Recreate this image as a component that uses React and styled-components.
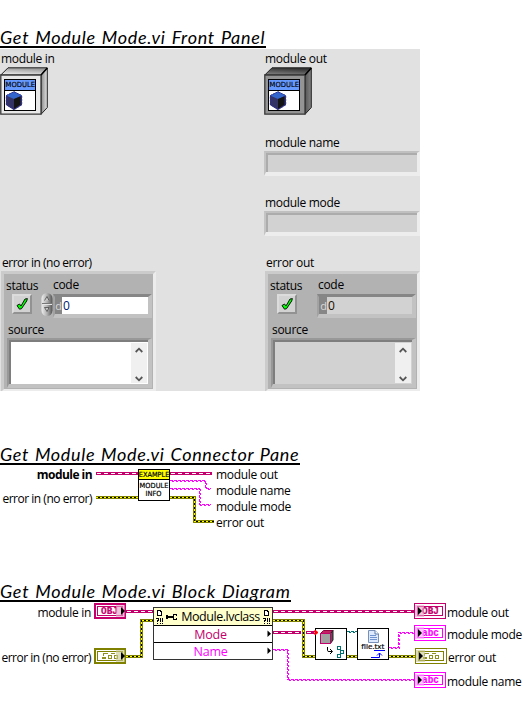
import React from "react";
import styled, { createGlobalStyle } from "styled-components";

const Global = createGlobalStyle`
  body { margin: 0; background: #fff; color: #000; }
  * { box-sizing: border-box; }
`;

const OBJ = "#c4006c";
const STR = "#ff00ff";
const ERR = "#7f7f00";
const SANS = '"Open Sans", "Noto Sans", sans-serif';

const Page = styled.main`
  width: 524px;
  height: 714px;
  overflow: hidden;
  display: flex;
  flex-direction: column;
  align-items: flex-start;
`;

const Heading = styled.h2`
  margin: ${(p) => p.$top}px 0 0;
  height: 21px;
  width: ${(p) => p.$width}px;
  overflow: hidden;
  border-bottom: 2px solid #000;
  font: italic 400 18px/20px Lato, sans-serif;
  letter-spacing: ${(p) => p.$track ?? 0.72}px;
  word-spacing: 1px;
  white-space: nowrap;
`;

const Label = styled.span`
  display: block;
  height: 16px;
  font: ${(p) => (p.$bold ? 700 : 400)} 12px/17px ${SANS};
  letter-spacing: ${(p) => p.$track ?? -0.3}px;
  white-space: nowrap;
  color: #000;
`;

/* ---------- front panel ---------- */

const FrontPanel = styled.section`
  width: 420px;
  height: 343px;
  margin-top: 1px;
  background: #e1e1e1;
  display: grid;
  grid-template-columns: 264px 156px;
  overflow: hidden;
`;

const PanelColumn = styled.div`
  display: flex;
  flex-direction: column;
  padding-top: 1px;
`;

const Control = styled.div`
  height: ${(p) => p.$height}px;
  flex: none;
  & > ${Label} { margin-left: ${(p) => p.$inset || 1}px; margin-bottom: 1px; }
  & > svg { display: block; }
`;

const StringField = styled.div`
  width: 156px;
  height: 25px;
  background: #d2d2d2;
  border: solid;
  border-width: 2px 3px 4px 2px;
  border-color: #c0c0c0 #ededed #ededed #c4c4c4;
  box-shadow: inset 2px 2px 0 #acacac;
`;

const ClusterBox = styled.div`
  width: 155px;
  height: 121px;
  margin-left: 1px;
  background: #b2b2b2;
  border: 3px solid;
  border-color: #cbcbcb #ececec #ececec #cbcbcb;
  display: flex;
  flex-direction: column;
`;

const ClusterRow = styled.div`
  display: flex;
  height: 47px;
`;

const StatusCell = styled.div`
  width: ${(p) => (p.$out ? 49 : 37)}px;
  padding: 3px 0 0 2px;
`;

const Led = styled.div`
  width: 20px;
  height: 20px;
  margin: 1px 0 0 ${(p) => (p.$out ? 7 : 6)}px;
  background: #d2d2d2;
  border: 2px solid;
  border-color: #dcdcdc #929292 #929292 #dcdcdc;
  svg { display: block; }
`;

const CodeCell = styled.div`
  display: flex;
  flex-direction: column;
  padding-top: 2px;
  & > ${Label} { margin-left: ${(p) => (p.$out ? 1 : 12)}px; }
`;

const CodeRow = styled.div`
  display: flex;
  align-items: flex-start;
  padding-top: 2px;
  svg { display: block; margin-top: -2px; }
`;

const NumberField = styled.div`
  display: flex;
  width: 99px;
  height: 24px;
  border: solid;
  border-width: 3px 4px 4px 2px;
  border-color: #868686 #c2c2c2 #c2c2c2 #a2a2a2;
  background: ${(p) => (p.$out ? "#d2d2d2" : "#fff")};
`;

const Radix = styled.span`
  width: ${(p) => (p.$out ? 8 : 7)}px;
  background: #868686;
  color: #d8d8d8;
  text-align: right;
  font: 11px/18px ${SANS};
`;

const Digits = styled.span`
  padding-left: 1px;
  font: 12px/18px ${SANS};
  color: ${(p) => (p.$out ? "#201000" : "#002070")};
`;

const SourceCell = styled.div`
  padding-left: 3px;
  & > ${Label} { margin-left: 1px; margin-bottom: 1px; }
`;

const SourceBox = styled.div`
  width: 145px;
  height: 50px;
  border: solid;
  border-width: 2px 4px 4px 2px;
  border-color: #989898 #c2c2c2 #c2c2c2 #989898;
  box-shadow: inset 2px 2px 0 #7e7e7e;
  background: ${(p) => (p.$out ? "#d2d2d2" : "#fff")};
  display: flex;
  justify-content: flex-end;
  padding: 3px 1px 1px 3px;
`;

const ScrollBar = styled.div`
  width: 16px;
  background: #f0f0f0;
  display: flex;
  flex-direction: column;
  justify-content: space-between;
  align-items: center;
  padding: 4px 0 1px;
  svg { display: block; }
`;

const Chevron = ({ down }) => (
  <svg width="8" height="6" viewBox="0 0 8 6">
    <path d={down ? "M0.7 1L4 4.3L7.3 1" : "M0.7 5L4 1.7L7.3 5"} fill="none" stroke="#555" strokeWidth="1.8" />
  </svg>
);

const Spinner = () => (
  <svg width="12" height="25" viewBox="0 0 12 25">
    <defs>
      <linearGradient id="knob">
        <stop offset="0" stopColor="#eee" />
        <stop offset=".5" stopColor="#b0b0b0" />
        <stop offset="1" stopColor="#555" />
      </linearGradient>
    </defs>
    <rect x=".5" y="1" width="11" height="23" rx="5.5" fill="url(#knob)" />
    <path d="M2 12.5H11" stroke="#e6e6e6" />
    <path d="M1 11.5H11" stroke="#777" />
    <path d="M3.5 8.5L6 4.5L8 8.5M3.5 15.5H8L6 19.5Z" fill="#c8c8c8" stroke="#4a4a4a" strokeWidth=".8" />
  </svg>
);

const Check = () => (
  <svg width="16" height="16" viewBox="0 0 16 16">
    <path d="M3 9.5L5.5 8L7 10L11 3L13.4 2.6L12.7 5L7.5 12.7L5.5 13.2Z" fill="#00ff00" stroke="#000" strokeWidth=".9" />
  </svg>
);

const ClassCube = ({ dark }) => {
  const id = dark ? "cubeDark" : "cubeLight";
  return (
    <svg width="48" height="48" viewBox="0 0 48 48">
      <defs>
        <linearGradient id={id + "T"} x1="0" x2=".3" y1="1" y2="0">
          <stop offset="0" stopColor={dark ? "#888" : "#f4f4f4"} />
          <stop offset="1" stopColor={dark ? "#333" : "#999"} />
        </linearGradient>
        <linearGradient id={id + "S"} x1="0" x2="1">
          <stop offset="0" stopColor={dark ? "#555" : "#888"} />
          <stop offset="1" stopColor={dark ? "#858585" : "#e4e4e4"} />
        </linearGradient>
      </defs>
      <path d="M.8 8L8 .8H47.2L41 8Z" fill={`url(#${id}T)`} stroke="#222" />
      <path d="M41 8L47.3 1V40.5L41 47.3Z" fill={`url(#${id}S)`} stroke="#222" />
      <path d="M.8 8H41V47.2H.8Z" fill={dark ? "#949494" : "#e8e8e8"} stroke="#383838" strokeWidth="1.3" />
      <path d="M41 8L47.3 1" stroke="#000" strokeWidth="1.5" />
      <rect x="4.5" y="12.5" width="31" height="31" fill="#fff" stroke="#000" />
      <rect x="5" y="13" width="30" height="10" fill="#6699ff" />
      <path d="M4 23.5H36" stroke="#000" />
      <text x="5.6" y="20.4" fontFamily="DejaVu Sans" fontSize="7" textLength="29.4" lengthAdjust="spacingAndGlyphs" stroke="#000" strokeWidth=".15">MODULE</text>
      <path d="M14 24.5L22 28.5V38L14 43L6 38V28.5Z" fill="#333366" />
      <path d="M14 24.5L22 28.5L14 32L6 28.5Z" fill="#3366cc" />
      <path d="M14 32L20.5 29.2V37.5L14 42Z" fill="#141414" />
      <path d="M14 24.8L21.7 28.6V37.8L14 42.6L6.3 37.8V28.6Z" fill="none" stroke="#333399" strokeDasharray="2 1" />
    </svg>
  );
};

const ErrorCluster = ({ out }) => (
  <ClusterBox>
    <ClusterRow>
      <StatusCell $out={out}>
        <Label>status</Label>
        <Led $out={out}><Check /></Led>
      </StatusCell>
      <CodeCell $out={out}>
        <Label>code</Label>
        <CodeRow>
          {!out && <Spinner />}
          <NumberField $out={out}>
            <Radix $out={out}>d</Radix>
            <Digits $out={out}>0</Digits>
          </NumberField>
        </CodeRow>
      </CodeCell>
    </ClusterRow>
    <SourceCell>
      <Label>source</Label>
      <SourceBox $out={out}>
        <ScrollBar><Chevron /><Chevron down /></ScrollBar>
      </SourceBox>
    </SourceCell>
  </ClusterBox>
);

/* ---------- diagrams ---------- */

const Canvas = styled.section`
  position: relative;
  width: 524px;
  height: ${(p) => p.$height}px;
  flex: none;
`;

const Drawing = styled.svg`
  position: absolute;
  left: 0;
  top: 0;
`;

const NodeLabel = styled(Label)`
  position: absolute;
  top: ${(p) => p.$y - 8}px;
  ${(p) => (p.$right ? `right: ${524 - p.$right}px;` : `left: ${p.$x}px;`)}
`;

const ObjWire = ({ d }) => (
  <g fill="none" shapeRendering="crispEdges">
    <path d={d} stroke={OBJ} strokeWidth="3" />
    <path d={d} stroke="#fff" strokeWidth="1" strokeDasharray="4 3" strokeDashoffset="-1" />
  </g>
);

const ErrWire = ({ d }) => (
  <g fill="none" shapeRendering="crispEdges">
    <path d={d} stroke={ERR} strokeWidth="3" />
    <path d={d} stroke="#000" strokeWidth="1" />
    <path d={d} stroke="#ffff00" strokeWidth="1" strokeDasharray="2 2" />
  </g>
);

const StrWire = ({ d, color = STR }) => (
  <g fill="none" stroke={color} shapeRendering="crispEdges">
    <path d={d} strokeDasharray="3 1" />
    <path d={d} transform="translate(1 1)" strokeDasharray="2 2" strokeDashoffset="-1" />
  </g>
);

const MiniGlyph = ({ x, y }) => (
  <g fill="none" stroke="#909020" shapeRendering="crispEdges">
    <path d={`M${x + 1} ${y + 0.5}h5M${x + 9} ${y + 0.5}h4M${x + 1.5} ${y}v3M${x} ${y + 5}h4`} />
    <path d={`M${x} ${y + 5}h4`} strokeWidth="2" />
    <rect x={x + 6.5} y={y + 2.5} width="3" height="3" />
    <rect x={x + 12.5} y={y + 2.5} width="3" height="3" />
  </g>
);

const Terminal = ({ x, y, color, tint, text, out }) => (
  <g>
    <g shapeRendering="crispEdges">
      <rect x={x} y={y} width="32" height="16" fill={color} />
      <rect x={x + (out ? 1 : 2)} y={y + (out ? 1 : 2)} width={out ? 30 : 28} height={out ? 14 : 12} fill="#fff" />
      <rect x={x + 3.5} y={y + 3.5} width="25" height="9" fill="#fff" stroke={color} />
    </g>
    {text ? (
      <text x={x + (out ? 8 : 7)} y={y + 11.4} fontFamily="Liberation Mono" fontWeight="700" fontSize="10" textLength="17" lengthAdjust="spacingAndGlyphs" fill={color} stroke={color} strokeWidth=".2">{text}</text>
    ) : (
      <MiniGlyph x={x + 8} y={y + 5} />
    )}
    <rect x={out ? x + 1 : x + 22} y={y + 2} width="9" height="12" fill={tint} opacity=".62" />
    <path d={out ? `M${x + 4} ${y + 4}V${y + 12}L${x + 8} ${y + 8}Z` : `M${x + 27} ${y + 4}V${y + 12}L${x + 31} ${y + 8}Z`} fill="#000" />
  </g>
);

const ConnectorPane = () => (
  <Canvas $height={60}>
    <Drawing width="524" height="60" viewBox="0 465 524 60">
      <ObjWire d="M96 473.5H138" />
      <ObjWire d="M170 473.5H212" />
      <ErrWire d="M96 497.5H138" />
      <ErrWire d="M170 497.5H194.5V521.5H214" />
      <StrWire d="M170 480.5H205.5V488.5H211" />
      <StrWire d="M170 488.5H199.5V504.5H211" />
      <rect x="138.5" y="469.5" width="31" height="31" fill="#fff" stroke="#000" />
      <rect x="139" y="470" width="30" height="9" fill="#ffff00" />
      <path d="M138 479.5H170" stroke="#000" />
      <g fontFamily="DejaVu Sans" fontSize="7" stroke="#000" strokeWidth=".2">
        <text x="138.8" y="477.3" textLength="30.5" lengthAdjust="spacingAndGlyphs">EXAMPLE</text>
        <text x="139.6" y="488" textLength="28.8" lengthAdjust="spacingAndGlyphs">MODULE</text>
        <text x="145.5" y="496" textLength="16" lengthAdjust="spacingAndGlyphs">INFO</text>
      </g>
    </Drawing>
    <NodeLabel $bold $track={-0.55} $right={92} $y={9}>module in</NodeLabel>
    <NodeLabel $track={-0.48} $right={92} $y={33}>error in (no error)</NodeLabel>
    <NodeLabel $x={216} $y={9}>module out</NodeLabel>
    <NodeLabel $x={216} $y={25}>module name</NodeLabel>
    <NodeLabel $x={216} $y={41}>module mode</NodeLabel>
    <NodeLabel $x={216} $y={57}>error out</NodeLabel>
  </Canvas>
);

const PropertyNode = styled.div`
  position: absolute;
  left: 153px;
  top: 5px;
  width: 120px;
  height: 53px;
  border: 1px solid #333;
  background: #fff;
  display: grid;
  grid-template-rows: 18px 17px 16px;
`;

const PropertyHeader = styled.div`
  display: flex;
  align-items: center;
  justify-content: space-between;
  padding: 0 2px;
  background: #ffffcc;
  border-bottom: 1px solid #000;
  font: 12.5px/17px ${SANS};
  letter-spacing: -0.45px;
  svg { display: block; }
`;

const PropertyRow = styled.div`
  display: grid;
  grid-template-columns: 1fr 4px;
  align-items: center;
  padding: 0 1px 0 0;
  text-align: center;
  color: ${(p) => p.$color};
  border-bottom: ${(p) => (p.$last ? 0 : 1)}px solid #000;
  font: 12.5px/15px ${SANS};
  letter-spacing: -0.2px;
`;

const Arrow = () => (
  <svg width="4" height="8" viewBox="0 0 4 8"><path d="M.5 .5V7L4 3.8Z" fill="#000" /></svg>
);

const RefMark = () => (
  <svg width="7" height="16" viewBox="0 0 7 16" shapeRendering="crispEdges">
    <path d="M1.5 1.5H4L5.5 3V6.5H1.5Z" fill="#fff" stroke="#000" />
    <path d="M0 9.5H3M2.5 10V12M1.5 11V13M4.5 9V13M6.5 9V13M1 14.5H2M4 14.5H5M6 14.5H7" stroke="#000" fill="none" />
  </svg>
);

const Wrench = () => (
  <svg width="12" height="8" viewBox="0 0 12 8" shapeRendering="crispEdges">
    <path d="M0 3H7V5H0Z" fill="#000" />
    <path d="M0 2H2V6H0Z" fill="#000" />
    <path d="M7 1H11V2H8V6H11V7H7Z" fill="#000" />
    <path d="M10 2H11V3H10ZM10 5H11V6H10Z" fill="#000" />
  </svg>
);

const BlockDiagram = () => (
  <Canvas $height={112}>
    <Drawing width="524" height="112" viewBox="0 602 524 112">
      <ObjWire d="M126 611.5H153" />
      <ObjWire d="M273 611.5H414" />
      <ErrWire d="M126 656.5H141.5V620.5H153" />
      <ObjWire d="M273 632.5H301" />
      <ObjWire d="M306 632.5H315" />
      <ErrWire d="M273 620.5H303.5V656.5H315" />
      <ErrWire d="M347 656.5H357" />
      <ErrWire d="M389 656.5H415" />
      <StrWire d="M273 649.5H287.5V679.5H414" />
      <StrWire d="M389 647.5H398.5V632.5H414" />
      <StrWire d="M347 631.5H357" color="#007070" />

      <rect x="315.5" y="628.5" width="31" height="31" fill="#fff" stroke="#000" />
      <path d="M320.5 633.5L323.5 630.5H333L330.5 633.5Z" fill="#c02060" stroke="#900040" />
      <path d="M330.5 633.5L333 630.5V640L330.5 643.5Z" fill="#555" stroke="#222" />
      <rect x="320.5" y="633.5" width="10" height="10" fill="#a0a0a0" stroke={OBJ} />
      <path d="M315 630V635L318 632.5Z" fill="#ff0000" stroke="#ff0000" />
      <path d="M327.5 647V650.5Q327.5 651.5 329 651.5H332M330 649L332.5 651.5L330 654" fill="none" stroke="#000" />
      <g fill="none" stroke="#007070">
        <rect x="337.5" y="646.5" width="3" height="3" />
        <rect x="340.5" y="650.5" width="3" height="3" />
        <rect x="337.5" y="654.5" width="3" height="3" />
      </g>

      <rect x="357.5" y="628.5" width="31" height="31" fill="#fff" stroke="#000" />
      <path d="M368.5 630.5H375L378.5 634V642.5H368.5Z" fill="#dce9ff" stroke="#7890b8" />
      <path d="M375 630.5V634H378.5" fill="#fff" stroke="#5878a8" />
      <path d="M370 635.5H376M370 637.5H377M370 639.5H377" stroke="#6f93cf" />
      <text x="361.3" y="648.8" fontFamily="Open Sans" fontSize="7.8" textLength="23" lengthAdjust="spacingAndGlyphs" stroke="#000" strokeWidth=".2">file.txt</text>
      <path d="M374 650.5H385M371 657.5H379.5V653M377 655.5L379.5 653L382 655.5" fill="none" stroke="#0000ff" />

      <Terminal x={94} y={603} color={OBJ} tint="#e8a0c8" text="OBJ" />
      <Terminal x={94} y={648} color={ERR} tint="#c8c890" />
      <Terminal x={414} y={603} color={OBJ} tint="#e8a0c8" text="OBJ" out />
      <Terminal x={414} y={625} color={STR} tint="#ffa8ff" text="abc" out />
      <Terminal x={415} y={648} color={ERR} tint="#c8c890" out />
      <Terminal x={414} y={672} color={STR} tint="#ffa8ff" text="abc" out />
    </Drawing>
    <PropertyNode>
      <PropertyHeader><RefMark /><Wrench /><span>Module.lvclass</span><RefMark /></PropertyHeader>
      <PropertyRow $color={OBJ}>Mode<Arrow /></PropertyRow>
      <PropertyRow $color={STR} $last>Name<Arrow /></PropertyRow>
    </PropertyNode>
    <NodeLabel $right={91} $y={10}>module in</NodeLabel>
    <NodeLabel $track={-0.48} $right={91} $y={55}>error in (no error)</NodeLabel>
    <NodeLabel $x={447} $y={10}>module out</NodeLabel>
    <NodeLabel $x={447} $y={32}>module mode</NodeLabel>
    <NodeLabel $x={448} $y={55}>error out</NodeLabel>
    <NodeLabel $x={447} $y={79}>module name</NodeLabel>
  </Canvas>
);

export default function App() {
  return (
    <Page>
      <Global />
      <Heading $top={27} $width={266}>Get Module Mode.vi Front Panel</Heading>
      <FrontPanel>
        <PanelColumn>
          <Control $height={204}><Label>module in</Label><ClassCube /></Control>
          <Control $height={138} $inset={2}><Label $track={-0.48}>error in (no error)</Label><ErrorCluster /></Control>
        </PanelColumn>
        <PanelColumn>
          <Control $height={84}><Label>module out</Label><ClassCube dark /></Control>
          <Control $height={60}><Label>module name</Label><StringField /></Control>
          <Control $height={60}><Label>module mode</Label><StringField /></Control>
          <Control $height={138} $inset={2}><Label>error out</Label><ErrorCluster out /></Control>
        </PanelColumn>
      </FrontPanel>
      <Heading $top={53} $width={300} $track={0.66}>Get Module Mode.vi Connector Pane</Heading>
      <ConnectorPane />
      <Heading $top={56} $width={291}>Get Module Mode.vi Block Diagram</Heading>
      <BlockDiagram />
    </Page>
  );
}
